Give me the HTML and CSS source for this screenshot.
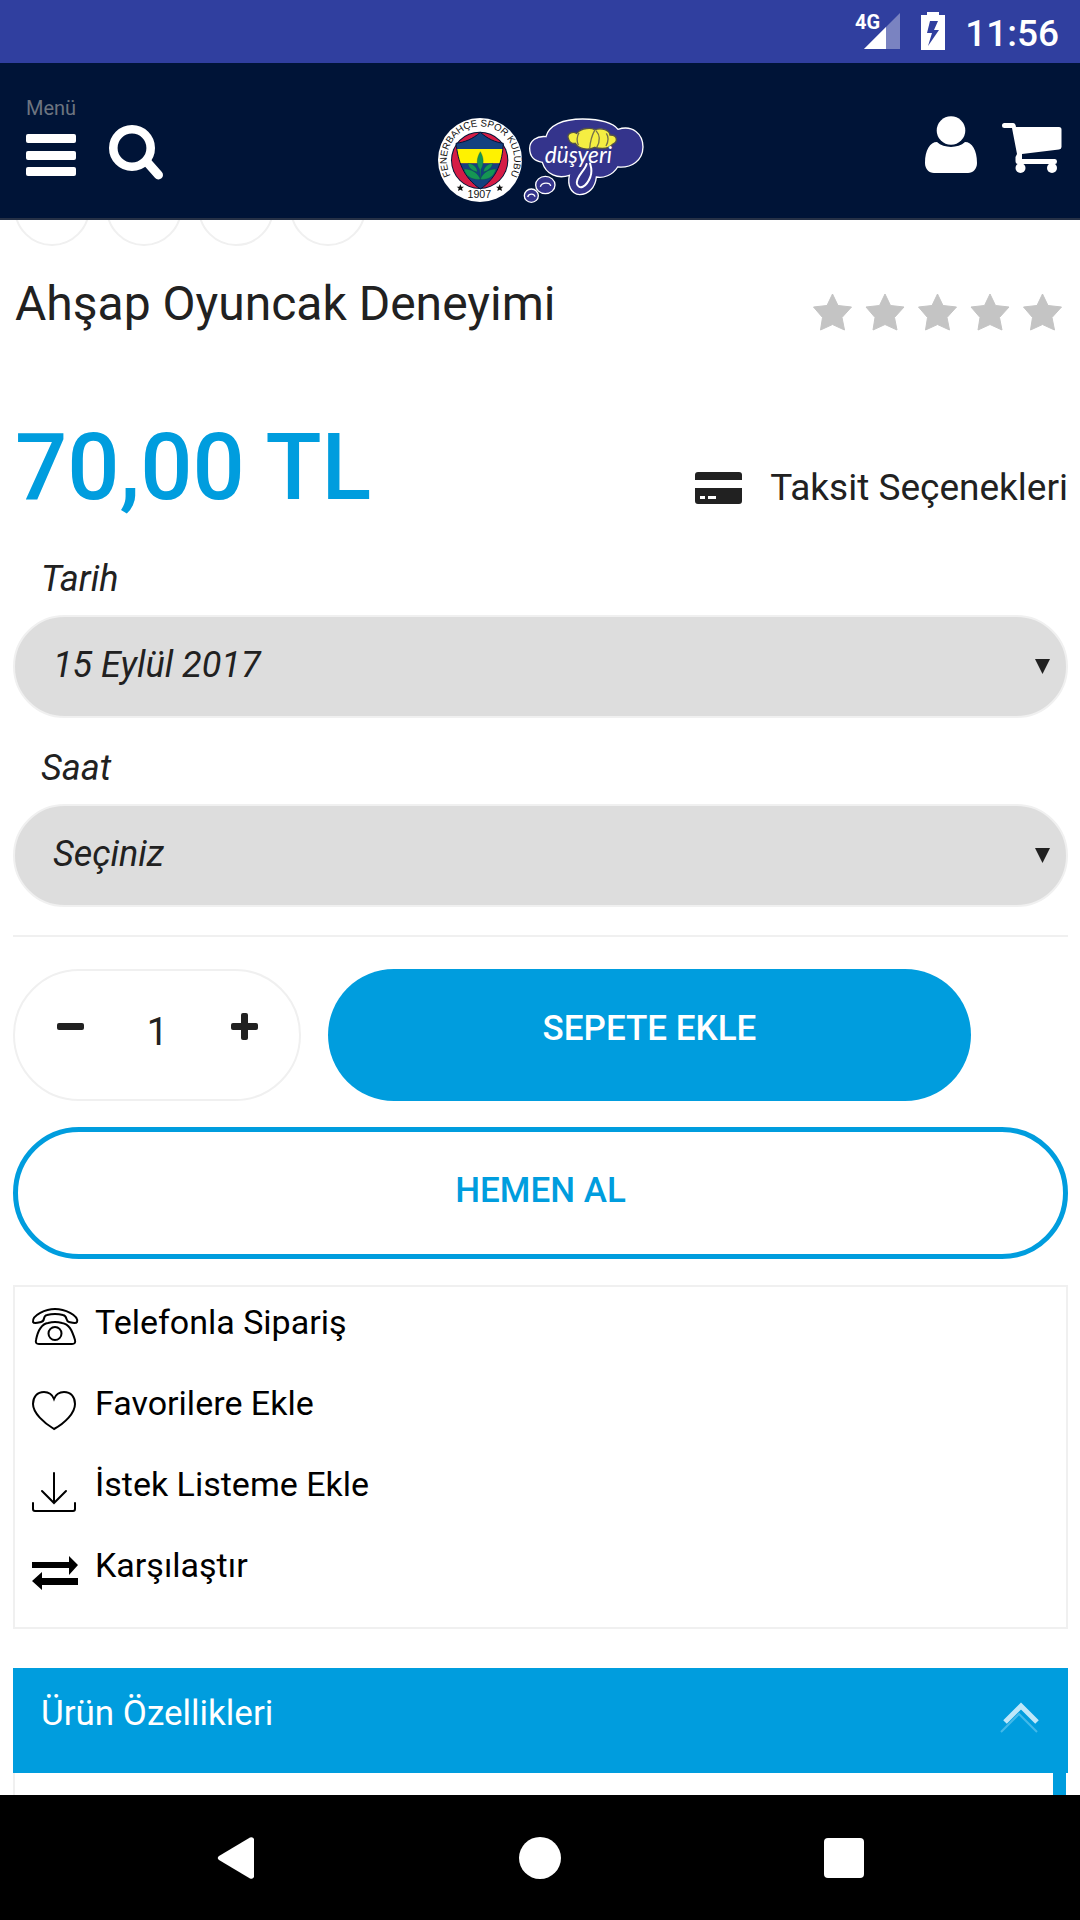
FILE: index.html
```html
<!DOCTYPE html>
<html lang="tr">
<head>
<meta charset="utf-8">
<meta name="viewport" content="width=device-width, initial-scale=1">
<title>Ahşap Oyuncak Deneyimi</title>
<link rel="stylesheet" href="styles.css">
</head>
<body>
<div class="status-bar">
  <svg class="signal" viewBox="0 0 46 38" role="img" aria-label="4G">
    <path d="M45 1V37H9z" fill="#7a83c1"/>
    <path d="M31 15V37H9z" fill="#fff"/>
    <text class="signal-text" x="0" y="17">4G</text>
  </svg>
  <svg class="battery" viewBox="0 0 24 38" aria-hidden="true">
    <path fill="#fff" fill-rule="evenodd" d="M6 0H18V3H24V38H0V3H6zM9 9L6 21H11L7 34L18 18H13L17 9z"/>
  </svg>
  <time class="clock">11:56</time>
</div>

<header class="site-header">
  <div class="header-left">
    <button class="icon-button menu-button" type="button">
      <span class="menu-label">Menü</span>
      <svg class="menu-icon" viewBox="0 0 50 46" aria-hidden="true"><g fill="#fff"><rect width="50" height="9" rx="2"/><rect y="17" width="50" height="9" rx="2"/><rect y="33" width="50" height="9" rx="2"/></g></svg>
    </button>
    <button class="icon-button" type="button" aria-label="Ara">
      <svg class="search-icon" viewBox="0 0 54 55" fill="none" stroke="#fff" aria-hidden="true"><circle cx="23" cy="23" r="18.700" stroke-width="8.600"/><path d="M38 37L49.500 50" stroke-width="9" stroke-linecap="round"/></svg>
    </button>
  </div>
  <a class="logo" href="#" aria-label="Fenerbahçe Düşyeri">
    <svg class="logo-art" viewBox="45 48 630 264" aria-hidden="true">
      <defs>
        <path id="ring-top" d="M101 241A101 101 0 1 1 262 241"/>
        <clipPath id="shield"><path d="M181 97C204 117 224 126 250 130C247 183 233 232 181 267C129 232 114 183 108 130C136 126 158 117 181 97z"/></clipPath>
      </defs>
      <circle cx="180" cy="180" r="126" fill="#fff"/>
      <circle cx="179" cy="181" r="86" fill="#001437"/>
      <circle cx="179" cy="181" r="83" fill="#d51c46"/>
      <g clip-path="url(#shield)">
        <rect x="95" y="90" width="170" height="60" fill="#14417f"/>
        <rect x="95" y="147" width="170" height="43" fill="#fff200"/>
        <rect x="95" y="190" width="170" height="80" fill="#14417f"/>
      </g>
      <path d="M181 97C204 117 224 126 250 130C247 183 233 232 181 267C129 232 114 183 108 130C136 126 158 117 181 97z" fill="none" stroke="#001437" stroke-width="3"/>
      <g fill="#159653" stroke="#0d4f45" stroke-width="1"><path d="M181 155C193 175 191 194 183 208L181 240L179 208C169 194 169 175 181 155z"/><path d="M181 238C157 240 137 230 132 207C155 207 174 218 181 238z"/><path d="M181 238C205 240 222 230 228 207C207 207 188 218 181 238z"/><path d="M172 216C155 212 146 204 144 190C160 192 171 201 172 216z"/><path d="M190 216C205 212 215 204 218 190C203 192 192 201 190 216z"/></g>
      <text class="ring-text" text-anchor="middle"><textPath href="#ring-top" startOffset="50%">FENERBAHÇE SPOR KULÜBÜ</textPath></text>
      <text class="year-text" x="178" y="295" text-anchor="middle">1907</text>
      <path fill="#111" d="M121 253l3 7 8 0-6 5 2 8-7-4-7 4 2-8-6-5 8 0z"/>
      <path fill="#111" d="M239 253l3 7 8 0-6 5 2 8-7-4-7 4 2-8-6-5 8 0z"/>
      <g fill="#34348c" stroke="#fff" stroke-width="4">
        <path d="M378 110C386 76 428 57 488 57C542 58 579 68 594 88C637 74 669 101 669 141C668 181 636 205 593 201C578 226 548 236 529 231C526 263 505 284 479 284C452 282 442 255 448 226C414 238 378 224 367 187C339 183 329 168 329 145C329 122 350 107 378 110z"/>
        <ellipse cx="376" cy="255" rx="29" ry="26"/><ellipse cx="334" cy="287" rx="21" ry="20"/>
      </g>
      <g fill="none" stroke="#fff" stroke-width="4"><path d="M361 260C366 246 390 246 392 258M323 291C327 280 342 280 345 290"/></g>
      <path d="M446 118C437 100 459 93 470 100C486 82 514 83 524 89C546 82 569 91 570 105C593 104 594 126 579 132C563 151 535 145 524 142C502 153 475 146 466 130C457 132 448 127 446 118z" fill="#f5ee42" stroke="#555347" stroke-width="4"/>
      <path d="M477 98Q467 116 475 136M525 89Q511 115 509 146M528 92Q547 113 530 143M559 100Q570 116 558 138" fill="none" stroke="#77734b" stroke-width="4"/>
      <path d="M500 192C494 214 466 230 471 252C477 270 498 263 511 231C518 212 513 200 510 190" fill="none" stroke="#fff" stroke-width="6" stroke-linecap="round"/>
      <text class="brand-text" x="374" y="188">düşyeri</text>
    </svg>
  </a>
  <div class="header-right">
    <button class="icon-button" type="button" aria-label="Hesabım">
      <svg class="user-icon" viewBox="0 0 52 58" fill="#fff" aria-hidden="true"><circle cx="26" cy="14.500" r="14.300"/><path d="M12 26C19 32.500 33 32.500 40 26C47 26 52 34 52 47C52 53 48 57 43 57H9C4 57 0 53 0 47C0 34 5 26 12 26z"/></svg>
    </button>
    <a class="cart-link" href="#" aria-label="Sepetim">
      <svg class="cart-icon" viewBox="0 0 60 58" fill="#fff" aria-hidden="true"><path d="M2.500 7H11Q13.500 7 14 11H57Q59.500 11 59.500 13.500V31Q59.500 33 57 33.500L20 38V43H53Q55 43 55 45.500Q55 48 53 48H16Q13.500 48 13.500 45V41L15 38L10 12H2.500Q0 12 0 9.500Q0 7 2.500 7z"/><circle cx="18.500" cy="52" r="5"/><circle cx="50" cy="52" r="5"/></svg>
    </a>
  </div>
</header>

<main class="product">
  <div class="thumbs">
    <span class="thumb"></span><span class="thumb"></span><span class="thumb"></span><span class="thumb"></span>
  </div>

  <div class="title-row">
    <h1 class="title">Ahşap Oyuncak Deneyimi</h1>
    <svg class="stars" viewBox="0 0 249 38" role="img" aria-label="0 / 5">
      <defs><path id="star" d="M19.500 1L25 12.500L38.500 14L29 24.500L31.500 37L19.500 31.500L7.500 37L9.500 24.500L.500 14L14 12.500z" fill="#c4c4c4" stroke="#c4c4c4" stroke-linejoin="round"/></defs>
      <use href="#star"/><use href="#star" x="52.500"/><use href="#star" x="105"/><use href="#star" x="157.500"/><use href="#star" x="210"/>
    </svg>
  </div>

  <div class="price-row">
    <strong class="price">70,00 TL</strong>
    <a class="installments" href="#">
      <svg class="card-icon" viewBox="0 0 47 32" fill="#212121" aria-hidden="true"><path d="M0 8V3Q0 0 3 0H44Q47 0 47 3V8z"/><path fill-rule="evenodd" d="M0 16H47V29Q47 32 44 32H3Q0 32 0 29zM5 24V27H10V24zM13 24V27H21V24z"/></svg>
      Taksit Seçenekleri
    </a>
  </div>

  <form class="order-form">
    <div class="fields">
      <div class="field">
        <label class="field-label" for="date">Tarih</label>
        <select class="field-select" id="date"><option>15 Eylül 2017</option></select>
      </div>
      <div class="field">
        <label class="field-label" for="hour">Saat</label>
        <select class="field-select" id="hour"><option>Seçiniz</option></select>
      </div>
    </div>
    <hr class="divider">
    <div class="buy-row">
      <div class="quantity">
        <button class="step" type="button" aria-label="Azalt"><svg class="step-icon" viewBox="0 0 27 27" aria-hidden="true"><rect y="10" width="27" height="7" rx="2" fill="#212121"/></svg></button>
        <input class="quantity-input" type="text" value="1" aria-label="Adet">
        <button class="step" type="button" aria-label="Artır"><svg class="step-icon" viewBox="0 0 27 27" fill="#212121" aria-hidden="true"><rect y="10" width="27" height="7" rx="2"/><rect x="10" width="7" height="27" rx="2"/></svg></button>
      </div>
      <button class="pill pill-solid" type="button">SEPETE EKLE</button>
    </div>
    <button class="pill pill-outline" type="button">HEMEN AL</button>
  </form>

  <ul class="actions">
    <li><a class="action" href="#">
      <svg class="action-icon" viewBox="0 0 46 44" fill="none" stroke="#000" stroke-width="2" aria-hidden="true"><path d="M1 15C0 8 14 2 23 2S47 8 45 15C44 17 41 16 37 15C33 14 36 9 31 8Q23 6 15 8C10 9 14 14 9 15C5 16 2 17 1 15z"/><path d="M7 37Q3 37 4 33C6 23 9 17 16 16Q23 14 30 16C37 17 40 23 43 33Q44 37 40 37z"/><circle cx="23" cy="26.500" r="6.500"/></svg>
      Telefonla Sipariş</a></li>
    <li><a class="action" href="#">
      <svg class="action-icon" viewBox="0 4 46 44" fill="none" stroke="#000" stroke-width="2" aria-hidden="true"><path d="M22 15C20 10 16 8 12 8C5 8 1 13 1 20C1 29 12 39 22 45C33 39 43 29 43 20C43 13 39 8 32 8C28 8 24 10 22 15z"/></svg>
      Favorilere Ekle</a></li>
    <li><a class="action" href="#">
      <svg class="action-icon" viewBox="0 4 46 44" fill="none" stroke="#000" stroke-width="2" stroke-linecap="round" aria-hidden="true"><path d="M22 8V37M10 26L22 38L34 26M1 38V44Q1 46 3 46H41Q43 46 43 44V38"/></svg>
      İstek Listeme Ekle</a></li>
    <li><a class="action" href="#">
      <svg class="action-icon" viewBox="0 4 46 44" aria-hidden="true"><path d="M0 16H37V10L46 19L37 29V22H0zM46 39H10V44L0 35L10 26V32H46z"/></svg>
      Karşılaştır</a></li>
  </ul>

  <section class="accordion">
    <button class="accordion-head" type="button" aria-expanded="true">
      Ürün Özellikleri
      <svg class="chevron" viewBox="0 0 40 30" fill="none" aria-hidden="true"><path d="M1 29L19 11L37 29" stroke="#43b9e9" stroke-width="2"/><path d="M5 19L21 3L37 19" stroke="#bfe7f9" stroke-width="5"/></svg>
    </button>
    <div class="accordion-body"></div>
  </section>
</main>

<nav class="nav-bar" aria-label="Sistem">
  <button class="icon-button" type="button" aria-label="Geri"><svg class="nav-icon" viewBox="0 0 42 42" aria-hidden="true"><path d="M4 19L35 .500Q38 -.500 39 2V40Q38 42.500 35 41.500L4 23Q1.500 21 4 19z" fill="#fff"/></svg></button>
  <button class="icon-button" type="button" aria-label="Ana ekran"><svg class="nav-icon" viewBox="0 0 42 42" aria-hidden="true"><circle cx="21" cy="21" r="21" fill="#fff"/></svg></button>
  <button class="icon-button" type="button" aria-label="Son uygulamalar"><svg class="nav-icon" viewBox="0 0 42 42" aria-hidden="true"><rect x="1" y="1" width="40" height="40" rx="4" fill="#fff"/></svg></button>
</nav>
</body>
</html>
```
FILE: styles.css
```css
* { box-sizing: border-box; }

body {
  margin: 0;
  min-height: 100vh;
  display: flex;
  flex-direction: column;
  background: #fff;
  color: #212121;
  font: 34px/44px Roboto, sans-serif;
}

button, input, select { font: inherit; color: inherit; margin: 0; }
a { color: inherit; text-decoration: none; }
svg { display: block; flex: none; overflow: visible; }

.icon-button {
  display: block;
  padding: 0;
  border: 0;
  background: none;
}

/* Device status bar */
.status-bar {
  display: flex;
  justify-content: flex-end;
  gap: 20px;
  height: 63px;
  padding: 12px 21px 0 0;
  background: #303f9f;
  color: #fff;
}
.signal { width: 46px; height: 38px; }
.signal-text { font: bold 20px Roboto, sans-serif; fill: #fff; }
.battery { width: 24px; height: 38px; }
.clock { font-size: 37px; font-weight: 500; }

/* Site header */
.site-header {
  display: grid;
  grid-template-columns: 1fr auto 1fr;
  align-items: start;
  height: 157px;
  padding: 33px 18px 0;
  border-bottom: 2px solid #263146;
  background: #001437;
}
.header-left {
  display: flex;
  align-items: flex-end;
  gap: 33px;
  padding-left: 8px;
}
.menu-button { text-align: left; }
.menu-label {
  display: block;
  margin-bottom: 14px;
  color: #6d7480;
  font-size: 20px;
  line-height: 24px;
}
.menu-icon { width: 50px; height: 46px; }
.search-icon { width: 54px; height: 55px; }
.logo { margin-top: 20px; }
.logo-art { width: 210px; height: 88px; }
.ring-text { font: 29px "Liberation Sans", sans-serif; fill: #111; }
.year-text { font: 32px "Liberation Sans", sans-serif; fill: #111; }
.brand-text { font: italic 68px Lato, sans-serif; fill: #fff; }
.header-right {
  display: flex;
  justify-content: flex-end;
  gap: 25px;
  margin-top: 20px;
}
.user-icon { width: 52px; height: 58px; }
.cart-icon { width: 60px; height: 58px; }

/* Product */
.product {
  flex: 1;
  display: flex;
  flex-direction: column;
  padding: 0 12px 0 13px;
}
.thumbs {
  display: flex;
  align-items: flex-end;
  gap: 16px;
  height: 26px;
  padding-left: 1px;
  overflow: hidden;
}
.thumb {
  width: 76px;
  height: 76px;
  border: 2px solid #f0f0f0;
  border-radius: 50%;
}
.title-row {
  display: flex;
  justify-content: space-between;
  align-items: center;
  margin-top: 28px;
  padding: 0 6px 0 2px;
}
.title {
  margin: 0;
  font-size: 48px;
  font-weight: 400;
  line-height: 60px;
}
.stars { width: 249px; height: 38px; margin-top: 16px; }
.price-row {
  display: flex;
  justify-content: space-between;
  align-items: flex-end;
  margin-top: 84px;
  padding-left: 2px;
}
.price {
  color: #009dde;
  font-size: 92px;
  font-weight: 500;
  line-height: 100px;
}
.installments {
  display: flex;
  align-items: center;
  gap: 28px;
  padding-bottom: 8px;
  font-size: 37px;
}
.card-icon { width: 47px; height: 32px; }

/* Order form */
.order-form { margin-top: 41px; }
.fields { display: grid; gap: 30px; }
.field-label {
  display: block;
  margin-bottom: 16px;
  padding-left: 28px;
  font-size: 36px;
  font-style: italic;
  line-height: 40px;
}
.field-select {
  display: block;
  width: 100%;
  height: 103px;
  padding: 0 38px 4px;
  border: 2px solid #f0f0f0;
  border-radius: 52px;
  appearance: none;
  background: #ddd url("data:image/svg+xml,%3Csvg xmlns='http://www.w3.org/2000/svg' viewBox='0 0 15 15'%3E%3Cpath d='M0 0H15L7.5 15z' fill='%23212121'/%3E%3C/svg%3E") no-repeat right 16px center / 15px 15px;
  font-size: 36px;
  font-style: italic;
}
.divider {
  height: 2px;
  margin: 28px 0 32px;
  border: 0;
  background: #f0f0f0;
}
.buy-row {
  display: grid;
  grid-template-columns: 288px 1fr;
  gap: 27px;
  margin-bottom: 26px;
  padding-right: 97px;
}
.quantity {
  display: flex;
  justify-content: space-between;
  align-items: center;
  padding: 0 41px 0 42px;
  border: 2px solid #f0f0f0;
  border-radius: 66px;
}
.step {
  padding: 0 0 18px;
  border: 0;
  background: none;
}
.step-icon { width: 27px; height: 27px; }
.quantity-input {
  width: 60px;
  padding: 0 0 6px;
  border: 0;
  background: none;
  font-size: 38px;
  text-align: center;
}
.pill {
  display: block;
  width: 100%;
  height: 132px;
  padding: 0 0 12px;
  border: 0;
  border-radius: 66px;
  font-size: 35px;
  font-weight: 500;
}
.pill-solid { background: #009dde; color: #fff; }
.pill-outline {
  padding-bottom: 4px;
  border: 5px solid #009dde;
  background: #fff;
  color: #009dde;
}

/* Quick actions */
.actions {
  display: flex;
  flex-direction: column;
  gap: 37px;
  margin: 26px 0 0;
  padding: 13px 17px 40px;
  border: 2px solid #f0f0f0;
  color: #000;
  list-style: none;
}
.action { display: flex; align-items: center; gap: 17px; }
.action-icon { width: 46px; height: 44px; margin-top: 7px; margin-bottom: -7px; }

/* Accordion */
.accordion {
  flex: 1;
  display: flex;
  flex-direction: column;
  margin-top: 39px;
}
.accordion-head {
  display: flex;
  justify-content: space-between;
  align-items: center;
  height: 105px;
  padding: 0 28px 14px;
  border: 0;
  background: #009dde;
  color: #fff;
  font-size: 35px;
}
.chevron { width: 40px; height: 30px; margin-top: 8px; }
.accordion-body {
  flex: 1;
  min-height: 22px;
  margin-right: 2px;
  border-left: 2px solid #f0f0f0;
  border-right: 13px solid #009dde;
}

/* Device navigation */
.nav-bar {
  display: flex;
  justify-content: center;
  align-items: center;
  gap: 262px;
  height: 126px;
  background: #000;
}
.nav-icon { width: 42px; height: 42px; }
```
